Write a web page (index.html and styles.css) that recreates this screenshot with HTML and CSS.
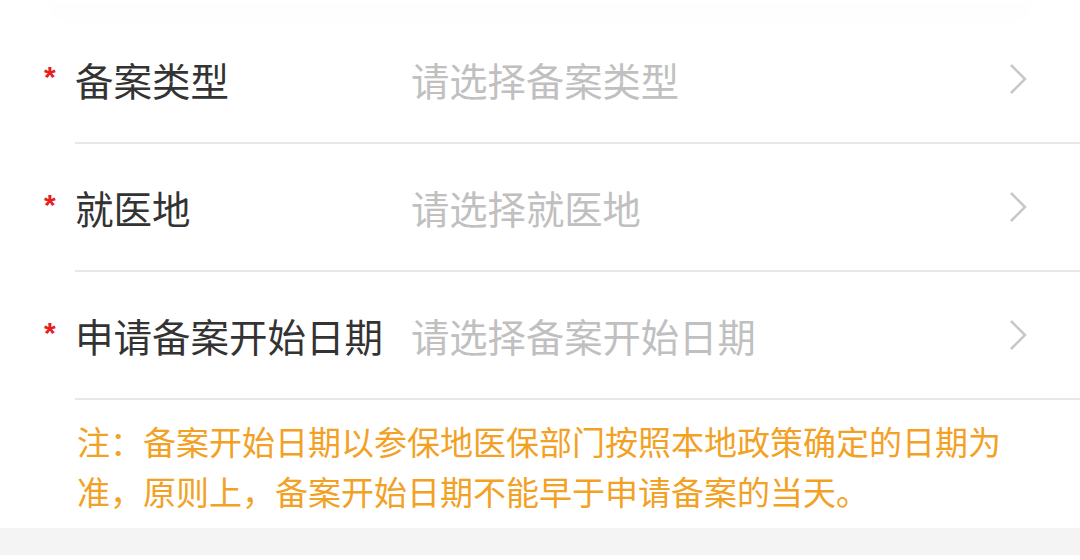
FILE: index.html
```html
<!DOCTYPE html>
<html lang="zh-CN">
<head>
<meta charset="utf-8">
<link rel="stylesheet" href="styles.css">
</head>
<body>
<div class="card"></div>
<div class="form">
  <div class="row">
    <div class="mark">*</div>
    <div class="body">
      <div class="label">备案类型</div>
      <div class="value">请选择备案类型</div>
      <svg class="chev" viewBox="0 0 18 32" width="18" height="32"><polyline points="2,2 16,16 2,30" fill="none" stroke="#c8c8c8" stroke-width="2.6"/></svg>
    </div>
  </div>
  <div class="row">
    <div class="mark">*</div>
    <div class="body">
      <div class="label">就医地</div>
      <div class="value">请选择就医地</div>
      <svg class="chev" viewBox="0 0 18 32" width="18" height="32"><polyline points="2,2 16,16 2,30" fill="none" stroke="#c8c8c8" stroke-width="2.6"/></svg>
    </div>
  </div>
  <div class="row">
    <div class="mark">*</div>
    <div class="body">
      <div class="label">申请备案开始日期</div>
      <div class="value">请选择备案开始日期</div>
      <svg class="chev" viewBox="0 0 18 32" width="18" height="32"><polyline points="2,2 16,16 2,30" fill="none" stroke="#c8c8c8" stroke-width="2.6"/></svg>
    </div>
  </div>
</div>
<div class="note">注：备案开始日期以参保地医保部门按照本地政策确定的日期为准，原则上，备案开始日期不能早于申请备案的当天。</div>
<div class="band"></div>
</body>
</html>
```
FILE: styles.css
```css
html, body {
  margin: 0;
  padding: 0;
  background: #ffffff;
}
body {
  width: 1080px;
  height: 560px;
  overflow: hidden;
  font-family: "Noto Sans CJK SC", "Noto Sans", sans-serif;
}
.card {
  height: 3px;
  margin: 0 48px;
  background: #ffffff;
  border-radius: 0 0 22px 22px;
  box-shadow: 0 4px 30px rgba(0, 0, 0, 0.09);
}
.form {
  margin-top: 13px;
}
.row {
  display: flex;
}
.mark {
  width: 75px;
  box-sizing: border-box;
  padding-left: 44px;
  padding-top: 47px;
  color: #e62020;
  font-family: "Liberation Sans", sans-serif;
  font-weight: bold;
  font-size: 30px;
  line-height: 28px;
}
.body {
  flex: 1;
  height: 126px;
  display: flex;
  align-items: center;
  border-bottom: 2px solid #e8e8e8;
  padding-right: 53px;
}
.label {
  width: 336px;
  flex: none;
  font-size: 38.5px;
  color: #333333;
  white-space: nowrap;
}
.value {
  flex: 1;
  font-size: 38.3px;
  color: #c0c0c0;
  white-space: nowrap;
}
.chev {
  flex: none;
  display: block;
}
.note {
  padding: 16px 60px 12px 77px;
  font-size: 33px;
  line-height: 50px;
  color: #f2a125;
}
.band {
  height: 27px;
  background: #f4f4f4;
}
```
